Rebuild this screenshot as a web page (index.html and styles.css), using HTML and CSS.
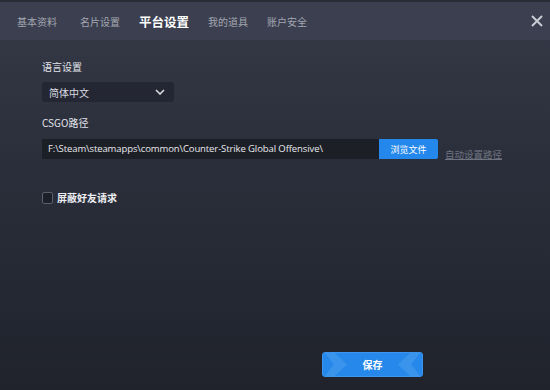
FILE: index.html
```html
<!DOCTYPE html>
<html lang="zh">
<head>
    <meta charset="UTF-8">
    <title>平台设置</title>
    <link rel="stylesheet" href="styles.css">
</head>
<body>
    <div class="window">
        <div class="tabs">
            <span class="tab first">基本资料</span>
            <span class="tab">名片设置</span>
            <span class="tab active">平台设置</span>
            <span class="tab">我的道具</span>
            <span class="tab">账户安全</span>
            <span class="close">
                <svg width="12" height="12" viewBox="0 0 12 12"><path d="M1 1L11 11M11 1L1 11" stroke="#c9ccd4" stroke-width="2"/></svg>
            </span>
        </div>

        <div class="content">
            <div class="label">语言设置</div>
            <div class="select">
                <span>简体中文</span>
                <svg width="10" height="6" viewBox="0 0 10 6"><path d="M1 1L5 5L9 1" fill="none" stroke="#d8dae0" stroke-width="1.6"/></svg>
            </div>

            <div class="label path-label">CSGO路径</div>
            <div class="path-row">
                <div class="path-input">F:\Steam\steamapps\common\Counter-Strike Global Offensive\</div>
                <button class="browse">浏览文件</button>
                <a class="auto-link">自动设置路径</a>
            </div>

            <label class="check">
                <span class="box"></span>
                <span>屏蔽好友请求</span>
            </label>
        </div>

        <div class="footer">
            <button class="save">保存</button>
        </div>
    </div>
</body>
</html>
```

FILE: styles.css
```css
body {
    margin: 0;
    padding: 0;
    font-family: "Noto Sans CJK SC", "Noto Sans", sans-serif;
    background-color: #1e2029;
}
.window {
    width: 550px;
    height: 390px;
    display: flex;
    flex-direction: column;
    background: linear-gradient(to bottom, #363a48 0%, #2b2f3b 40%, #20232c 100%);
    overflow: hidden;
}
.tabs {
    height: 40px;
    box-sizing: border-box;
    border-top: 2px solid #2a2d38;
    background-color: #3b3f4f;
    display: flex;
    align-items: center;
    padding: 0 0 0 17px;
    gap: 19px;
}
.tab {
    font-size: 10px;
    color: #a3a7b2;
}
.tab.first {
    margin-right: 4px;
}
.tab.active {
    font-size: 12.5px;
    font-weight: bold;
    color: #ffffff;
}
.close {
    margin-left: auto;
    margin-right: 7px;
    width: 12px;
    height: 12px;
    display: flex;
}
.content {
    padding: 20px 0 0 42px;
    flex: 1;
}
.label {
    font-size: 10px;
    color: #e2e4ea;
    line-height: 14px;
}
.select {
    margin-top: 8px;
    width: 132px;
    height: 20px;
    box-sizing: border-box;
    background-color: #242733;
    border-radius: 3px;
    display: flex;
    align-items: center;
    justify-content: space-between;
    padding: 0 9px 0 7px;
    font-size: 10px;
    color: #d8dae0;
}
.path-label {
    margin-top: 14px;
}
.path-row {
    margin-top: 7px;
    display: flex;
    align-items: center;
}
.path-input {
    width: 337px;
    height: 20px;
    box-sizing: border-box;
    background-color: #1d1f27;
    padding: 0 6px;
    font-family: "Open Sans", "Noto Sans", sans-serif;
    font-size: 9.5px;
    line-height: 20px;
    color: #e8e9ee;
    letter-spacing: -0.1px;
    white-space: nowrap;
}
.browse {
    width: 59px;
    height: 20px;
    border: none;
    border-radius: 0 2px 2px 0;
    background-color: #2387ec;
    color: #ffffff;
    font-family: inherit;
    font-size: 9px;
    padding: 0;
}
.auto-link {
    margin-left: 7px;
    margin-top: 10px;
    font-size: 9.5px;
    color: #6e7380;
    text-decoration: underline;
}
.check {
    margin-top: 29px;
    display: flex;
    align-items: center;
    gap: 4px;
    font-size: 10px;
    font-weight: bold;
    color: #eceef2;
}
.box {
    width: 9px;
    height: 10px;
    border: 1.5px solid #5b5f6b;
    border-radius: 2px;
    background-color: #1e2029;
}
.footer {
    display: flex;
    justify-content: flex-start;
    padding: 0 0 13px 322px;
}
.save {
    position: relative;
    overflow: hidden;
    width: 101px;
    height: 25px;
    border: 1px solid #3a94f0;
    border-radius: 3px;
    background-color: #2588ea;
    color: #ffffff;
    font-family: inherit;
    font-size: 10px;
    font-weight: bold;
    padding: 0;
}
.save::before,
.save::after {
    content: "";
    position: absolute;
    top: 0;
    width: 22px;
    height: 100%;
    background-color: rgba(255, 255, 255, 0.1);
}
.save::before {
    left: 2px;
    clip-path: polygon(0 0, 45% 0, 100% 50%, 45% 100%, 0 100%, 40% 50%);
}
.save::after {
    right: 2px;
    clip-path: polygon(55% 0, 100% 0, 60% 50%, 100% 100%, 55% 100%, 0 50%);
}
```
